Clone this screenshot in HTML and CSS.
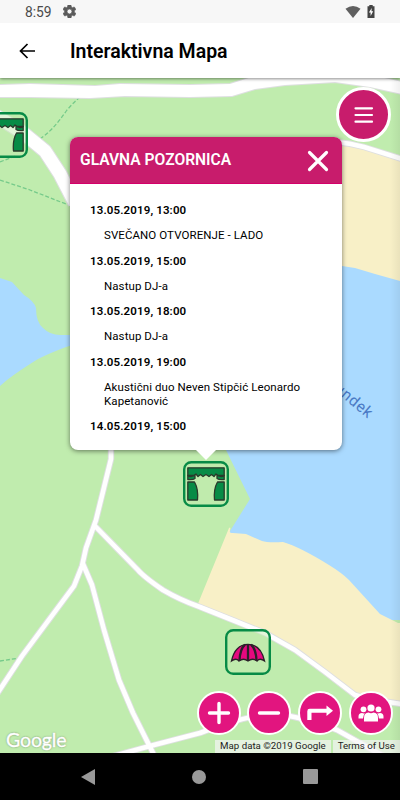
FILE: index.html
```
<!DOCTYPE html>
<html lang="hr">
<head>
  <meta charset="UTF-8" />
  <meta name="viewport" content="width=device-width, initial-scale=1.0"/>
  <title>Interaktivna Mapa</title>
  <link rel="stylesheet" href="styles.css">
</head>
<body>
  <div class="statusbar">
    <span class="time">8:59</span>
    <svg class="gear" width="13" height="13" viewBox="2 2 20 20"><path fill="#5b5b5b" fill-rule="evenodd" stroke="#5b5b5b" d="M19.4 13l.1-1-.1-1 2.1-1.6c.2-.2.3-.5.1-.7l-2-3.400c-.1-.2-.4-.3-.6-.2l-2.500 1c-.5-.4-1.100-.7-1.700-1l-.4-2.600c0-.2-.2-.4-.5-.4h-4c-.2 0-.5.2-.5.4l-.4 2.600c-.6.300-1.200.600-1.700 1l-2.500-1c-.2-.1-.5 0-.6.2l-2 3.400c-.1.200-.1.500.1.700L4.500 11l-.1 1 .1 1-2.100 1.600c-.2.200-.3.500-.1.700l2 3.400c.1.200.4.300.6.200l2.500-1c.5.400 1.100.7 1.700 1l.4 2.600c0 .2.200.4.500.4h4c.2 0 .5-.2.500-.4l.4-2.600c.6-.3 1.200-.6 1.700-1l2.500 1c.2.100.5 0 .6-.2l2-3.400c.1-.2.100-.5-.1-.7zM12 15.800a3.800 3.800 0 1 1 0-7.600 3.800 3.800 0 0 1 0 7.600z"/></svg>
    <div class="status-icons">
      <svg width="16" height="12" viewBox="0 0 16 12"><path fill="#5f5f5f" d="M.5 2.700Q8-2.500 15.500 2.700L8 12z"/></svg>
      <svg width="8" height="13" viewBox="0 0 8 13"><path fill="#444" d="M2.300 0h3.400v1.300H7.500V13H.5V1.300h1.800z"/><path fill="#fff" d="M4.700 3L1.900 7.500h1.700V11l2.600-4.700H4.500z"/></svg>
    </div>
  </div>

  <header class="appbar">
    <svg width="16" height="16" viewBox="0 0 16 16"><path d="M16 8H2M8.500 1L1.500 8l7 7" fill="none" stroke="#000" stroke-width="1.700"/></svg>
    <h1>Interaktivna Mapa</h1>
  </header>

  <main class="map">
    <svg class="tiles" width="400" height="675" viewBox="0 78 400 675">
      <rect y="78" width="400" height="675" fill="#c0ecae"/>
      <!-- water -->
      <path class="water" d="M0 278L12 282L24 295Q34 301 36 308Q36 322 43 328Q50 335 60 335H80V343L66 347Q50 353 38 359Q20 370 7 380L0 386z"/>
      <path class="water" d="M226 450L250 499L230 531V620H400V260H330V450z"/>
      <!-- sand -->
      <path class="sand" d="M330 144L360 146L400 158V281L375 274L355 268L342 266H330z"/>
      <path class="sand" d="M229 528Q231 526 230 531Q229 533 233 533L246 534L262 541Q268 543 283 542Q300 547 329 565Q342 573 349 580L380 614L398 623H400V704H375L355 695L325 672L295 651L265 633L197 606z"/>
      <!-- paths -->
      <path class="trail" d="M80 97Q73 103 67 110Q52 132 38 140M0 162L15 156M0 180L30 190L66 204M0 661L20 658"/>
      <!-- roads -->
      <g class="road-edge">
        <path d="M0 85L30 84L95 86L120 84L190 85L230 84L252 77H380L402 82V94L370 87L335 82L285 85L255 89L232 96L190 97L125 96L90 98L30 97L0 97z"/>
        <path class="wide" d="M-4 116L22 132L45 151L60 174L75 203"/>
        <path class="medium" d="M335 142Q350 143 364 147L402 159"/>
        <path class="line" d="M111 445V459L96 520L86 548L82 566L74 586L45 625L22 656L-3 694M95 526L138 570Q144 577 163 590Q180 600 200 607L235 621L265 633L295 650L325 672L355 695L375 700L402 704M83 564L92 585L104 630L119 680L133 713L155 757M110 757L150 746L200 733Q250 714 275 714Q300 716 337 730L385 757"/>
      </g>
      <g class="road">
        <path d="M0 85L30 84L95 86L120 84L190 85L230 84L252 77H380L402 82V94L370 87L335 82L285 85L255 89L232 96L190 97L125 96L90 98L30 97L0 97z"/>
        <path class="wide" d="M-4 116L22 132L45 151L60 174L75 203"/>
        <path class="medium" d="M335 142Q350 143 364 147L402 159"/>
        <path class="line" d="M111 445V459L96 520L86 548L82 566L74 586L45 625L22 656L-3 694M95 526L138 570Q144 577 163 590Q180 600 200 607L235 621L265 633L295 650L325 672L355 695L375 700L402 704M83 564L92 585L104 630L119 680L133 713L155 757M110 757L150 746L200 733Q250 714 275 714Q300 716 337 730L385 757"/>
      </g>
      <text class="lake-name" text-anchor="end" transform="translate(368 419) rotate(40)">Bundek</text>
    </svg>

    <!-- stage and umbrella pins -->
    <svg class="pin pin-left" width="46" height="46" viewBox="0 0 46 46"><use href="#stage"/></svg>
    <svg class="pin pin-stage" width="46" height="46" viewBox="0 0 46 46">
      <g id="stage">
        <rect x="1.200" y="1.200" width="43.600" height="43.600" rx="7" fill="#c0ecae" fill-opacity=".45" stroke="#078b46" stroke-width="2.400"/>
        <g fill="#078b46" stroke="#293b2b" stroke-width="1.300" stroke-linejoin="round">
          <path d="M4.800 6.800H41.200V14.500H35L33 13L31 15.500L28.500 13.500L26 15.500L23 13.500L20 15.500L17.500 13.500L15 15.500L13 13L11 14.500H4.800z"/>
          <path d="M4.800 14.500Q8 17 12 14V17.500Q10 19 4.800 18.500zM41.200 14.500Q38 17 34 14V17.500Q36 19 41.200 18.500z"/>
          <path d="M4.800 21H11.500Q15.500 28 14.500 39H4.800zM41.200 21H34.500Q30.500 28 31.500 39H41.200z"/>
        </g>
      </g>
    </svg>
    <svg class="pin pin-umbrella" width="46" height="46" viewBox="0 0 46 46">
      <rect x="1.200" y="1.200" width="43.600" height="43.600" rx="7" fill="#c0ecae" fill-opacity=".45" stroke="#078b46" stroke-width="2.400"/>
      <path d="M6.500 32Q10 15.500 23 15.300Q36 15.500 39.500 32Q35 28.500 32 32Q27.500 28.500 23 32Q18.500 28.500 14 32Q11 28.500 6.500 32z" fill="#e5097f" stroke="#2b2029" stroke-width="1.300"/>
      <path d="M14.500 31.500Q15 20 20 15.600M23 15.500V31.500M31.500 31.500Q31 20 26 15.600" fill="none" stroke="#2b2029" stroke-width="2.300"/>
    </svg>

    <section class="popup">
      <div class="popup-head">
        <h2>GLAVNA POZORNICA</h2>
        <svg width="22" height="22" viewBox="0 0 22 22"><path d="M2.500 2.500L19.500 19.500M19.500 2.500L2.500 19.500" stroke="#fff" stroke-width="3.200" stroke-linecap="round"/></svg>
      </div>
      <dl>
        <dt>13.05.2019, 13:00</dt>
        <dd>SVEČANO OTVORENJE - LADO</dd>
        <dt>13.05.2019, 15:00</dt>
        <dd>Nastup DJ-a</dd>
        <dt>13.05.2019, 18:00</dt>
        <dd>Nastup DJ-a</dd>
        <dt>13.05.2019, 19:00</dt>
        <dd>Akustični duo Neven Stipčić Leonardo Kapetanović</dd>
        <dt>14.05.2019, 15:00</dt>
      </dl>
    </section>

    <button class="round menu">
      <svg width="20" height="18" viewBox="0 0 20 18"><path d="M1.500 2.300H18M1.500 9H18M1.500 15.700H18" stroke="#fff" stroke-width="2.200" stroke-linecap="round"/></svg>
    </button>

    <div class="controls">
      <button class="round"><svg width="24" height="24" viewBox="0 0 24 24"><path d="M2.500 12H21.500M12 2.500V21.500" stroke="#fff" stroke-width="3.400" stroke-linecap="round"/></svg></button>
      <button class="round"><svg width="24" height="24" viewBox="0 0 24 24"><path d="M2.500 12H21.500" stroke="#fff" stroke-width="3.400" stroke-linecap="round"/></svg></button>
      <button class="round"><svg width="26" height="24" viewBox="0 0 26 24"><path fill="#fff" d="M.3 19V10.200Q.3 7.800 2.700 7.800H19.500V4.500L26 9.800L19.500 15V11.800H4.500V19z"/></svg></button>
      <button class="round"><svg width="26" height="20" viewBox="0 0 26 20"><g fill="#fff"><circle cx="13" cy="5" r="3.600"/><circle cx="5.500" cy="6.300" r="2.900"/><circle cx="20.500" cy="6.300" r="2.900"/><path d="M6 18.500V15Q6 9.800 10.500 9.600Q13 11 15.500 9.600Q20 9.800 20 15V18.500zM.5 15.500V13.500Q.5 10 4 9.900Q5.500 10.700 7 10.200Q5 12 5 15.500zM25.500 15.500V13.500Q25.500 10 22 9.900Q20.500 10.700 19 10.200Q21 12 21 15.500z"/></g></svg></button>
    </div>

    <span class="logo">Google</span>
    <div class="credits"><span>Map data ©2019 Google</span><span>Terms of Use</span></div>
  </main>

  <nav class="navbar">
    <svg width="14" height="16" viewBox="0 0 14 16"><path fill="#999" d="M0 8L14 0V16z"/></svg>
    <svg width="14" height="14" viewBox="0 0 14 14"><circle cx="7" cy="7" r="7" fill="#999"/></svg>
    <svg width="15" height="15" viewBox="0 0 15 15"><rect width="15" height="15" rx="1" fill="#999"/></svg>
  </nav>
</body>
</html>
```
FILE: styles.css
```
* { box-sizing: border-box; }
body { margin: 0; width: 400px; height: 800px; display: flex; flex-direction: column; overflow: hidden; font-family: Roboto, sans-serif; color: #000; background: #fff; }
svg { display: block; flex: none; }
h1, h2, dl, dd { margin: 0; }

.statusbar { height: 23px; flex: none; display: flex; align-items: center; padding: 0 25px 0 25px; background: #f7f7f7; position: relative; z-index: 3; }
.time { font-size: 13.800px; line-height: 23px; color: #4a4a4a; position: relative; top: 1px; }
.gear { margin-left: 11px; }
.status-icons { display: flex; align-items: center; gap: 6px; margin-left: auto; }

.appbar { height: 55px; flex: none; display: flex; align-items: center; padding-left: 19px; background: #fff; box-shadow: 0 1px 3px rgba(0,0,0,.45); position: relative; z-index: 2; }
.appbar h1 { margin-left: 35px; font-size: 19.500px; font-weight: 600; position: relative; top: 1px; }

.map { height: 675px; flex: none; position: relative; overflow: hidden; }
.map::after { content: ""; position: absolute; top: 0; right: 0; width: 10px; height: 100%; background: linear-gradient(to right, transparent, rgba(0,0,0,.06)); pointer-events: none; }
.water { fill: #aadaff; }
.sand { fill: #f8f0c7; }
.trail { fill: none; stroke: #75ca8a; stroke-width: 1.300; stroke-dasharray: 4 2; }
.road-edge { fill: none; stroke: #dedfe1; stroke-width: 2; }
.road-edge .wide { stroke-width: 15; }
.road-edge .medium { stroke-width: 6.500; }
.road-edge .line { stroke-width: 6.400; }
.road { fill: none; stroke: #fff; stroke-linejoin: round; }
.road path:first-child { fill: #fff; stroke: none; }
.road .wide { stroke-width: 13; }
.road .medium { stroke-width: 4.500; }
.road .line { stroke-width: 4.600; }
.lake-name { font-size: 15.500px; fill: #4b7ac5; letter-spacing: .6px; }

.pin { position: absolute; }
.pin-left { left: -18px; top: 34px; }
.pin-stage { left: 183px; top: 383px; }
.pin-umbrella { left: 225px; top: 551px; }

.popup { position: absolute; left: 70px; top: 59px; width: 272px; height: 313px; background: #fff; border-radius: 8px; box-shadow: 0 1px 5px rgba(0,0,0,.5); }
.popup::after { content: ""; position: absolute; left: 126px; top: 313px; border: 10px solid transparent; border-top-color: #fff; border-bottom: 0; }
.popup-head { height: 47px; display: flex; align-items: center; justify-content: space-between; padding: 0 13px 0 10px; background: #c81c6c; border-bottom: 1px solid #d4006a; border-radius: 8px 8px 0 0; color: #fff; }
.popup-head h2 { font-size: 15.600px; font-weight: 600; }
.popup-head svg { position: relative; top: 1px; }
.popup dl { padding: 19px 20px 0; font-size: 11.500px; line-height: 14px; }
.popup dt { font-weight: 600; letter-spacing: .13px; }
.popup dd { margin: 11.300px 0 11.300px 14px; letter-spacing: .08px; }

.round { width: 44px; height: 44px; padding: 0; display: flex; align-items: center; justify-content: center; border: 2px solid #fff; border-radius: 50%; background: #e2157f; }
.menu { position: absolute; left: 336px; top: 9px; width: 55px; height: 55px; border-width: 3px; background: #c81c6c; }
.controls { position: absolute; left: 196.700px; top: 613px; display: flex; gap: 6.650px; }

.logo { position: absolute; left: 6px; bottom: 1px; font-family: Lato, sans-serif; font-size: 19.500px; line-height: 24px; letter-spacing: -.15px; color: #fff; -webkit-text-stroke: .4px #fff; text-shadow: 0 0 2px rgba(0,0,0,.5); }
.credits { position: absolute; right: 0; bottom: 0; display: flex; gap: 2px; font-size: 9.700px; color: #222; }
.credits span { height: 13px; padding: 0 5px; background: rgba(245,245,245,.7); line-height: 12px; white-space: nowrap; }

.navbar { height: 47px; flex: none; display: flex; align-items: center; justify-content: space-between; padding: 0 82px 0 81px; background: #000; }
```
